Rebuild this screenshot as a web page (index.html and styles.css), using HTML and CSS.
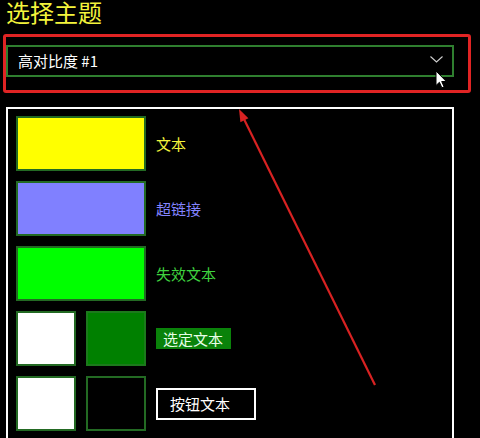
FILE: index.html
```html
<!DOCTYPE html>
<html lang="zh-CN">
<head>
<meta charset="utf-8">
<title>选择主题</title>
<link rel="stylesheet" href="styles.css">
</head>
<body>
<div class="page">
  <h1 class="title">选择主题</h1>
  <div class="select">
    <span class="select-text">高对比度 #1</span>
    <svg class="chevron" width="13" height="7" viewBox="0 0 13 7"><path d="M0.5 0.5 L6.5 6 L12.5 0.5" fill="none" stroke="#d0d0d0" stroke-width="1.1"/></svg>
  </div>
  <div class="panel">
    <div class="row">
      <div class="swatch wide yellow"></div>
      <span class="label label-text">文本</span>
    </div>
    <div class="row">
      <div class="swatch wide blue"></div>
      <span class="label label-link">超链接</span>
    </div>
    <div class="row">
      <div class="swatch wide green"></div>
      <span class="label label-disabled">失效文本</span>
    </div>
    <div class="row">
      <div class="swatch narrow white"></div>
      <div class="swatch narrow darkgreen"></div>
      <span class="label label-selected">选定文本</span>
    </div>
    <div class="row">
      <div class="swatch narrow white"></div>
      <div class="swatch narrow black"></div>
      <span class="label label-button">按钮文本</span>
    </div>
  </div>
</div>
<div class="highlight"></div>
<svg class="arrow" width="480" height="438" viewBox="0 0 480 438">
  <line x1="375" y1="385" x2="244.3" y2="119.8" stroke="#d82222" stroke-width="2.2"/>
  <polygon points="239,109 248.4,118.2 240.4,122.2" fill="#d82222"/>
</svg>
<svg class="cursor" width="13" height="19" viewBox="0 0 13 19">
  <path d="M1 1 L1 15.5 L4.4 12.3 L6.9 17.8 L9.1 16.8 L6.7 11.5 L11.3 11.5 Z" fill="#ffffff" stroke="#000000" stroke-width="1" stroke-linejoin="round"/>
</svg>
</body>
</html>
```
FILE: styles.css
```css
html, body {
  margin: 0;
  padding: 0;
  background: #000000;
  overflow: hidden;
  height: 438px;
}
body {
  font-family: "Noto Sans CJK SC", "Noto Sans", "Liberation Sans", sans-serif;
  color: #ffffff;
}
.page {
  padding-left: 6px;
  width: 448px;
}
.title {
  margin: -8px 0 0 0;
  font-size: 24px;
  line-height: 40px;
  height: 53px;
  font-weight: normal;
  color: #f4f43c;
}
.select {
  box-sizing: border-box;
  height: 32px;
  border: 2px solid #2f7f2f;
  display: flex;
  align-items: center;
  justify-content: space-between;
  padding: 0 9px 0 10px;
}
.select-text {
  font-size: 15px;
  line-height: 20px;
  color: #ffffff;
}
.chevron {
  display: block;
  margin-top: -3px;
}
.panel {
  box-sizing: border-box;
  margin-top: 30px;
  border: 2px solid #ffffff;
  padding: 7px 8px 12px 8px;
  display: flex;
  flex-direction: column;
  gap: 10px;
}
.row {
  display: flex;
  align-items: center;
  gap: 10px;
}
.swatch {
  box-sizing: border-box;
  height: 55px;
  border: 2px solid #236a23;
  flex: none;
}
.wide { width: 130px; }
.narrow { width: 60px; }
.yellow { background: #ffff00; }
.blue { background: #8080ff; }
.green { background: #00ff00; }
.white { background: #ffffff; }
.darkgreen { background: #008000; border-color: #1c7a1c; }
.black { background: #000000; }
.label {
  font-size: 15px;
  line-height: 20px;
}
.label-text { color: #f4f43c; }
.label-link { color: #8484ff; }
.label-disabled { color: #3fd23f; }
.label-selected {
  background: #0a820a;
  color: #e8ffe8;
  padding: 0 8px 0 7px;
  line-height: 21px;
}
.label-button {
  box-sizing: border-box;
  width: 100px;
  height: 32px;
  border: 2px solid #ffffff;
  padding-left: 12px;
  display: flex;
  align-items: center;
  color: #ffffff;
}
.highlight {
  position: absolute;
  left: 3px;
  top: 34px;
  width: 468px;
  height: 59px;
  box-sizing: border-box;
  border: 3px solid #e02424;
  border-radius: 3px;
}
.arrow {
  position: absolute;
  left: 0;
  top: 0;
  pointer-events: none;
}
.cursor {
  position: absolute;
  left: 435px;
  top: 70px;
}
```
